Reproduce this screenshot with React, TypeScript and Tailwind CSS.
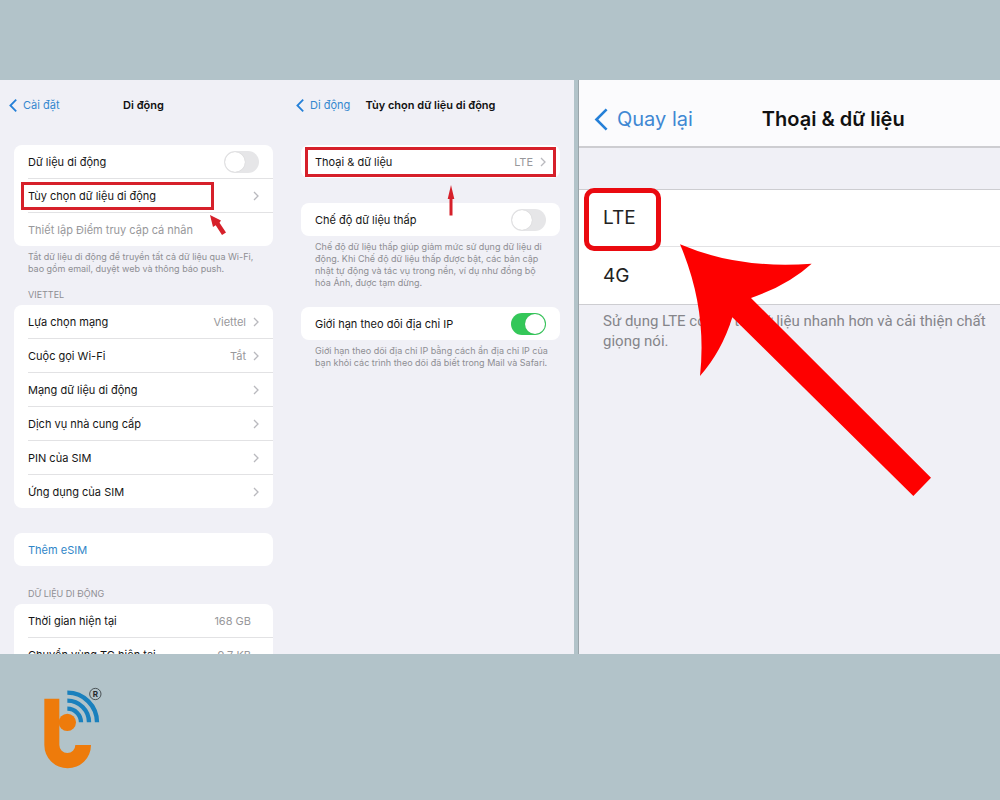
import type { ReactNode } from "react";

function Chevron() {
  return (
    <svg viewBox="0 0 6 10" className="h-[10px] w-[6px] shrink-0" fill="none" stroke="#b9b9be" strokeWidth="1.3" aria-hidden="true">
      <path d="M1 1l4 4-4 4" />
    </svg>
  );
}

function BackLink({ children, large = false }: { children: ReactNode; large?: boolean }) {
  return (
    <a
      href="#back"
      className={
        large
          ? "flex items-center gap-[9px] text-[20px] leading-6 whitespace-nowrap text-[#3f88d3]"
          : "flex items-center gap-[6px] justify-self-start text-[11px] leading-4 whitespace-nowrap text-[#3488cf]"
      }
    >
      <svg
        viewBox="0 0 8 13"
        className={large ? "h-[23px] w-[14px] shrink-0" : "h-[13px] w-[8px] shrink-0"}
        fill="none"
        stroke="#2580d8"
        strokeWidth={large ? "1.5" : "1.8"}
        aria-hidden="true"
      >
        <path d="M7.2 .7L1.4 6.5l5.8 5.8" />
      </svg>
      {children}
    </a>
  );
}

function PanelHeader({ back, title }: { back: string; title: string }) {
  return (
    <header className="grid h-[50px] grid-cols-[1fr_auto_1fr] items-center px-[9px]">
      <BackLink>{back}</BackLink>
      <h2 className="text-[11px] leading-4 font-semibold whitespace-nowrap text-[#111]">{title}</h2>
    </header>
  );
}

function Card({ children }: { children: ReactNode }) {
  return <div className="rounded-[8px] bg-white">{children}</div>;
}

function Row({ label, value, last = false, muted = false }: { label: string; value?: string; last?: boolean; muted?: boolean }) {
  return (
    <a href="#item" className="block pl-[14px]">
      <span className={`flex items-center gap-[7px] pr-[14px] ${last ? "h-[33px]" : "h-[34px] border-b border-[#e2e2e4]"}`}>
        <span className={`flex-1 text-[11px] leading-4 whitespace-nowrap ${muted ? "text-[#98989b]" : "text-[#151515]"}`}>{label}</span>
        {value && <span className="text-[11px] leading-4 text-[#98989b]">{value}</span>}
        {!muted && <Chevron />}
      </span>
    </a>
  );
}

function ToggleRow({ id, label, on = false, divided = false }: { id: string; label: string; on?: boolean; divided?: boolean }) {
  return (
    <div className="pl-[14px]">
      <div className={`flex items-center justify-between pr-[14px] ${divided ? "h-[34px] border-b border-[#e2e2e4]" : "h-[33px]"}`}>
        <label htmlFor={id} className="text-[11px] leading-4 whitespace-nowrap text-[#151515]">
          {label}
        </label>
        <input
          id={id}
          type="checkbox"
          role="switch"
          defaultChecked={on}
          className="h-[22px] w-[35px] shrink-0 appearance-none rounded-full bg-[#e6e6e8] p-px before:block before:size-[20px] before:rounded-full before:bg-white before:shadow-[0_0_1px_rgba(0,0,0,0.2)] checked:bg-[#34c759] checked:before:ml-[13px]"
        />
      </div>
    </div>
  );
}

function Note({ children }: { children: ReactNode }) {
  return <p className="pt-[5px] pr-[10px] pl-[14px] text-[9px] leading-[12px] text-[#8e8e93]">{children}</p>;
}

function Usage({ label, value }: { label: string; value: string }) {
  return (
    <div className="flex h-[33px] items-center justify-between pr-[22px] text-[11px] leading-4">
      <dt className="text-[#151515]">{label}</dt>
      <dd className="text-[#98989b]">{value}</dd>
    </div>
  );
}

function MobilePanel() {
  return (
    <section className="min-w-0 bg-[#f0f0f6]">
      <PanelHeader back="Cài đặt" title="Di động" />
      <div className="px-[14px] pt-[15px]">
        <Card>
          <ToggleRow id="mobile-data" label="Dữ liệu di động" divided />
          <div className="relative">
            <Row label="Tùy chọn dữ liệu di động" />
            <div className="pointer-events-none absolute top-[3px] left-[7px] h-[28px] w-[193px] border-[3px] border-[#d6202a]" />
            <svg viewBox="0 0 18 22" className="pointer-events-none absolute top-[35px] left-[195px] h-[22px] w-[18px]" fill="#d6202a" aria-hidden="true">
              <path d="M1 1l11 5.500-1.500 2.300L17 18.500l-4 2.500-6.300-9.800L4 13z" />
            </svg>
          </div>
          <Row label="Thiết lập Điểm truy cập cá nhân" last muted />
        </Card>
        <Note>Tắt dữ liệu di động để truyền tất cả dữ liệu qua Wi-Fi, bao gồm email, duyệt web và thông báo push.</Note>
        <h3 className="px-[14px] pt-[14px] pb-[4px] text-[9px] leading-[12px] text-[#8e8e93]">VIETTEL</h3>
        <Card>
          <Row label="Lựa chọn mạng" value="Viettel" />
          <Row label="Cuộc gọi Wi-Fi" value="Tắt" />
          <Row label="Mạng dữ liệu di động" />
          <Row label="Dịch vụ nhà cung cấp" />
          <Row label="PIN của SIM" />
          <Row label="Ứng dụng của SIM" last />
        </Card>
        <div className="pt-[25px]">
          <Card>
            <a href="#esim" className="flex h-[33px] items-center px-[14px] text-[11px] leading-4 text-[#2f86c8]">
              Thêm eSIM
            </a>
          </Card>
        </div>
        <h3 className="px-[14px] pt-[22px] pb-[4px] text-[9px] leading-[12px] text-[#8e8e93]">DỮ LIỆU DI ĐỘNG</h3>
        <dl className="rounded-t-[8px] bg-white pl-[14px]">
          <div className="border-b border-[#e2e2e4]">
            <Usage label="Thời gian hiện tại" value="168 GB" />
          </div>
          <div className="h-[16px] overflow-hidden">
            <Usage label="Chuyển vùng TG hiện tại" value="9,7 KB" />
          </div>
        </dl>
      </div>
    </section>
  );
}

function OptionsPanel() {
  return (
    <section className="min-w-0 bg-[#f0f0f6]">
      <PanelHeader back="Di động" title="Tùy chọn dữ liệu di động" />
      <div className="px-[14px] pt-[15px]">
        <div className="relative">
          <Card>
            <Row label="Thoại & dữ liệu" value="LTE" last />
          </Card>
          <div className="pointer-events-none absolute inset-x-[4px] top-[2px] h-[30px] border-[3px] border-[#d6202a]" />
          <svg viewBox="0 0 8 32" className="pointer-events-none absolute top-[39px] left-[146px] h-[32px] w-[8px]" fill="#d6202a" aria-hidden="true">
            <path d="M4 1l3.300 14H5.500v16.500h-3V15H.7z" />
          </svg>
        </div>
        <div className="pt-[25px]">
          <Card>
            <ToggleRow id="low-data" label="Chế độ dữ liệu thấp" />
          </Card>
          <Note>
            Chế độ dữ liệu thấp giúp giảm mức sử dụng dữ liệu di động. Khi Chế độ dữ liệu thấp được bật, các bản cập nhật tự động và tác vụ trong nền, ví dụ như đồng bộ hóa Ảnh, được tạm dừng.
          </Note>
        </div>
        <div className="pt-[18px]">
          <Card>
            <ToggleRow id="limit-ip" label="Giới hạn theo dõi địa chỉ IP" on />
          </Card>
          <Note>Giới hạn theo dõi địa chỉ IP bằng cách ẩn địa chỉ IP của bạn khỏi các trình theo dõi đã biết trong Mail và Safari.</Note>
        </div>
      </div>
    </section>
  );
}

function VoicePanel() {
  return (
    <section className="relative min-w-0 overflow-hidden border-l border-[#9aa5aa] bg-[#f0f0f6]">
      <header className="flex h-[68px] items-center gap-[69px] border-b-2 border-[#cdcdd1] bg-[#fbfbfd] pt-[12px] pl-[15px]">
        <BackLink large>Quay lại</BackLink>
        <h2 className="text-[20px] leading-6 font-semibold whitespace-nowrap text-[#111]">Thoại &amp; dữ liệu</h2>
      </header>
      <div className="mt-[41px] border-y border-[#cdcdd1] bg-white pl-[24px] text-[19px] leading-6 text-[#222]">
        <div className="relative">
          <button type="button" className="flex h-[57px] w-full items-center border-b border-[#e2e2e4] text-left">
            LTE
          </button>
          <div className="pointer-events-none absolute -top-[2px] -left-[19px] h-[63px] w-[77px] rounded-[10px] border-[5px] border-[#ea0a10]" />
        </div>
        <button type="button" className="flex h-[57px] w-full items-center text-left">
          4G
        </button>
      </div>
      <p className="pt-[6px] pl-[24px] font-['Roboto','Noto_Sans',sans-serif] text-[15px] leading-5 whitespace-nowrap text-[#85858a]">
        Sử dụng LTE có thể tải dữ liệu nhanh hơn và cải thiện chất
        <br />
        giọng nói.
      </p>
      <svg viewBox="0 0 870 840" className="pointer-events-none absolute top-[150px] left-[81px] h-[280px] w-[290px]" fill="#fe0000" aria-hidden="true">
        <path d="M60 43Q235 118 455 101Q385 165 273 204L813 743L760 798L217 262Q185 365 120 438Q142 235 60 43Z" />
      </svg>
    </section>
  );
}

function Logo() {
  return (
    <svg viewBox="0 0 270 315" className="h-[105px] w-[90px]" role="img" aria-label="Logo">
      <path d="M43 71H88V210A24 24 0 0 0 136 210H183A70 70 0 0 1 43 210Z" fill="#ee7b0b" />
      <circle cx="112" cy="142" r="26" fill="#ee7b0b" />
      <g fill="none" stroke="#1a80bd" strokeWidth="13">
        <path d="M112 53A89 89 0 0 1 201 142" />
        <path d="M112 77A65 65 0 0 1 177 142" />
        <path d="M112 101A41 41 0 0 1 153 142" />
      </g>
      <circle cx="196" cy="57" r="17" fill="#b2c3c9" stroke="#4b5357" strokeWidth="3" />
      <text x="196" y="65" textAnchor="middle" fill="#22282b" fontSize="24" fontWeight="700">
        R
      </text>
    </svg>
  );
}

export default function App() {
  return (
    <main className="min-h-screen bg-[#b2c3c9] pt-[80px] font-['Inter','Noto_Sans',sans-serif]">
      <div className="grid grid-cols-[574fr_422fr] gap-[4px]">
        <div className="grid min-w-0 grid-cols-2">
          <MobilePanel />
          <OptionsPanel />
        </div>
        <VoicePanel />
      </div>
      <footer className="px-[30px] pt-[21px]">
        <Logo />
      </footer>
    </main>
  );
}
